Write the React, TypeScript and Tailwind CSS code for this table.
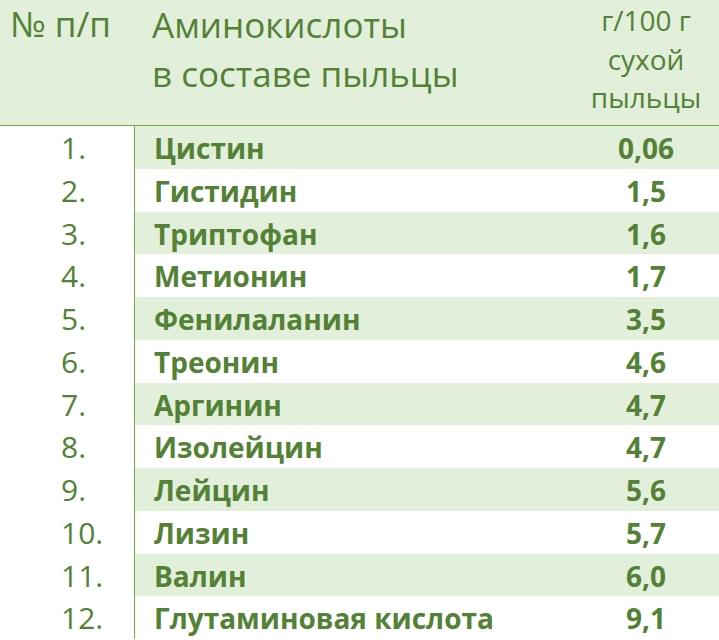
import React from "react";

const rows: [string, string][] = [
  ["Цистин", "0,06"],
  ["Гистидин", "1,5"],
  ["Триптофан", "1,6"],
  ["Метионин", "1,7"],
  ["Фенилаланин", "3,5"],
  ["Треонин", "4,6"],
  ["Аргинин", "4,7"],
  ["Изолейцин", "4,7"],
  ["Лейцин", "5,6"],
  ["Лизин", "5,7"],
  ["Валин", "6,0"],
  ["Глутаминовая кислота", "9,1"],
];

export default function App() {
  return (
    <div
      className="w-[719px] h-[640px] overflow-hidden bg-white text-[#538135]"
      style={{ fontFamily: "'Open Sans', Lato, 'Noto Sans', sans-serif" }}
    >
      <div className="flex flex-col bg-[#e2efda] border-b border-[#70ad47]">
        <div className="flex h-[122px]">
          <div className="w-[135px] shrink-0 pl-[10px] pt-[1px] text-[35px] leading-[46px] whitespace-nowrap">
            № п/п
          </div>
          <div className="flex-1 pl-[17px] text-[35px] leading-[49px] whitespace-nowrap">
            <div>Аминокислоты</div>
            <div>в составе пыльцы</div>
          </div>
          <div className="w-[146px] shrink-0 pt-[1px] text-center text-[28px] leading-[38.5px]">
            <div>г/100 г</div>
            <div>сухой</div>
            <div>пыльцы</div>
          </div>
        </div>
        <div className="h-[1px] bg-[#f1e8dc]" />
        <div className="h-[2px]" />
      </div>
      <div className="flex flex-col">
        {rows.map(([name, val], i) => (
          <div key={i} className="flex h-[42.75px]">
            <div className="w-[135px] shrink-0 border-r border-[#70ad47] pl-[61px] text-[30px] leading-[44px]">
              {i + 1}.
            </div>
            <div
              className={`flex flex-1 font-bold text-[28px] leading-[44px] ${
                i % 2 === 0 ? "bg-[#e2efda]" : "bg-white"
              }`}
            >
              <div className="flex-1 pl-[19px] whitespace-nowrap">{name}</div>
              <div className="w-[146px] shrink-0 text-center">{val}</div>
            </div>
          </div>
        ))}
      </div>
    </div>
  );
}
